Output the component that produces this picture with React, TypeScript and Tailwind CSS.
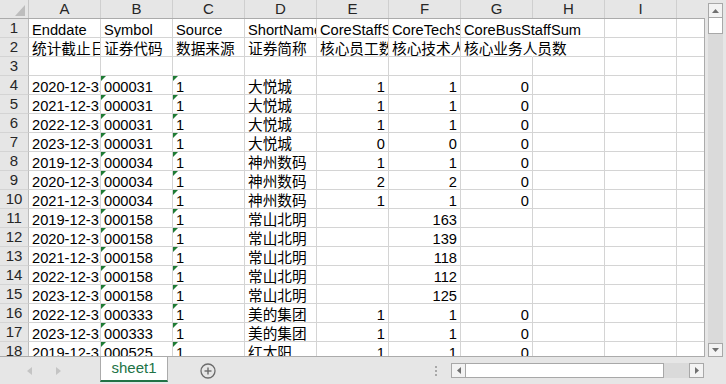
import React from 'react';

type Row = (string | number | null)[];

const cols = ['A', 'B', 'C', 'D', 'E', 'F', 'G', 'H', 'I'];

// A..G, the rest is empty
const rows: Row[] = [
  ['Enddate', 'Symbol', 'Source', 'ShortName', 'CoreStaffSum', 'CoreTechStaffSum', 'CoreBusStaffSum'],
  ['统计截止日期', '证券代码', '数据来源', '证券简称', '核心员工数', '核心技术人员数', '核心业务人员数'],
  [],
  ['2020-12-31', '000031', '1', '大悦城', 1, 1, 0],
  ['2021-12-31', '000031', '1', '大悦城', 1, 1, 0],
  ['2022-12-31', '000031', '1', '大悦城', 1, 1, 0],
  ['2023-12-31', '000031', '1', '大悦城', 0, 0, 0],
  ['2019-12-31', '000034', '1', '神州数码', 1, 1, 0],
  ['2020-12-31', '000034', '1', '神州数码', 2, 2, 0],
  ['2021-12-31', '000034', '1', '神州数码', 1, 1, 0],
  ['2019-12-31', '000158', '1', '常山北明', null, 163, null],
  ['2020-12-31', '000158', '1', '常山北明', null, 139, null],
  ['2021-12-31', '000158', '1', '常山北明', null, 118, null],
  ['2022-12-31', '000158', '1', '常山北明', null, 112, null],
  ['2023-12-31', '000158', '1', '常山北明', null, 125, null],
  ['2022-12-31', '000333', '1', '美的集团', 1, 1, 0],
  ['2023-12-31', '000333', '1', '美的集团', 1, 1, 0],
  ['2019-12-31', '000525', '1', '红太阳', 1, 1, 0],
];

const Corner = () => (
  <svg width="29" height="18" className="block">
    <polygon points="15,16 25,16 25,5" fill="#bdbdbd" />
  </svg>
);

const Cell: React.FC<{ value: string | number | null | undefined; spill?: boolean; flag?: boolean }> = ({ value, spill, flag }) => {
  const isNum = typeof value === 'number';
  return (
    <div
      className={
        'relative w-[72px] h-[19px] shrink-0 border-b border-r border-b-[#d4d4d4] whitespace-nowrap leading-[16px] pt-[3px] ' +
        (spill ? 'overflow-visible border-r-transparent z-10 ' : 'overflow-hidden border-r-[#d4d4d4] ') +
        (isNum ? 'text-right pr-[3px]' : 'text-left pl-[3px]')
      }
    >
      {flag && (
        <svg width="6" height="6" className="absolute left-0 top-0">
          <polygon points="0,0 5,0 0,5" fill="#1e7b34" />
        </svg>
      )}
      {value ?? ''}
    </div>
  );
};

const VScroll = () => (
  <div className="w-[21px] h-[357px] bg-[#e6e6e6] pt-[3px] pl-[3px]">
    <div className="w-[15px] h-full bg-[#dadada] flex flex-col">
      <div className="h-[15px] border border-[#a8a8a8] bg-[#f3f3f3] flex items-center justify-center">
        <svg width="7" height="4"><polygon points="0,4 7,4 3.5,0" fill="#707070" /></svg>
      </div>
      <div className="h-[17px] -mt-px border border-[#a8a8a8] bg-white" />
      <div className="flex-1" />
      <div className="h-[14px] border border-[#a8a8a8] bg-[#f3f3f3] flex items-center justify-center">
        <svg width="7" height="4"><polygon points="0,0 7,0 3.5,4" fill="#707070" /></svg>
      </div>
    </div>
  </div>
);

const BottomBar = () => (
  <div className="h-[27px] bg-[#e6e6e6] flex items-start">
    <div className="w-[100px] h-[27px] flex items-center">
      <svg width="5" height="8" className="ml-[27px]"><polygon points="5,0 5,8 0,4" fill="#c4c4c4" /></svg>
      <svg width="5" height="8" className="ml-[24px]"><polygon points="0,0 0,8 5,4" fill="#c4c4c4" /></svg>
    </div>
    <div className="w-[68px] h-[25px] bg-white border-x border-[#ababab] border-b-2 border-b-[#217346] flex items-center justify-center text-[15px] text-[#217346] pb-[1px]">
      sheet1
    </div>
    <div className="ml-[32px] h-[27px] flex items-center">
      <svg width="16" height="16">
        <circle cx="8" cy="8" r="7" fill="none" stroke="#6b6b6b" strokeWidth="1.3" />
        <line x1="4.5" y1="8" x2="11.5" y2="8" stroke="#6b6b6b" strokeWidth="1.4" />
        <line x1="8" y1="4.5" x2="8" y2="11.5" stroke="#6b6b6b" strokeWidth="1.4" />
      </svg>
    </div>
    <div className="ml-[219px] h-[27px] flex flex-col justify-center gap-[2px]">
      <div className="w-[2px] h-[2px] bg-[#a8a8a8]" />
      <div className="w-[2px] h-[2px] bg-[#a8a8a8]" />
      <div className="w-[2px] h-[2px] bg-[#a8a8a8]" />
    </div>
    <div className="ml-[14px] mt-[6px] flex h-[15px] w-[253px] bg-[#dadada]">
      <div className="w-[15px] h-[15px] border border-[#a8a8a8] bg-[#f3f3f3] flex items-center justify-center">
        <svg width="4" height="7"><polygon points="4,0 4,7 0,3.5" fill="#707070" /></svg>
      </div>
      <div className="w-[199px] h-[15px] -ml-px border border-[#a8a8a8] bg-white" />
      <div className="flex-1" />
      <div className="w-[15px] h-[15px] border border-[#a8a8a8] bg-[#f3f3f3] flex items-center justify-center">
        <svg width="4" height="7"><polygon points="0,0 0,7 4,3.5" fill="#707070" /></svg>
      </div>
    </div>
  </div>
);

const App: React.FC = () => {
  return (
    <div className="w-[726px] h-[384px] overflow-hidden bg-white text-[14.67px] text-black font-['Liberation_Sans','Noto_Sans_CJK_SC',sans-serif]">
      <div className="flex">
        <div className="w-[705px] h-[357px] flex flex-col">
          {/* column headers */}
          <div className="flex h-[19px] bg-[#e6e6e6] border-b border-[#ababab] shrink-0">
            <div className="w-[29px] border-r border-[#c6c6c6]">
              <Corner />
            </div>
            {cols.map(c => (
              <div key={c} className="w-[72px] shrink-0 border-r border-[#cfcfcf] text-center leading-[18px] text-[#262626] text-[15px]">
                {c}
              </div>
            ))}
            <div className="flex-1" />
          </div>

          {/* sheet body */}
          <div className="flex-1 overflow-hidden border-r border-b border-[#ababab]">
            {rows.map((r, i) => (
              <div key={i} className="flex">
                <div className="w-[29px] h-[19px] shrink-0 bg-[#e6e6e6] border-r border-b border-r-[#bdbdbd] border-b-[#d4d4d4] text-center leading-[18px] text-[#262626] text-[15px]">
                  {i + 1}
                </div>
                {cols.map((_, j) => (
                  <Cell
                    key={j}
                    value={r[j]}
                    spill={i < 2 && j === 6}
                    flag={i >= 3 && (j === 1 || j === 2)}
                  />
                ))}
                <div className="flex-1 h-[19px] border-b border-[#d4d4d4]" />
              </div>
            ))}
          </div>
        </div>
        <VScroll />
      </div>
      <BottomBar />
    </div>
  );
};

export default App;
